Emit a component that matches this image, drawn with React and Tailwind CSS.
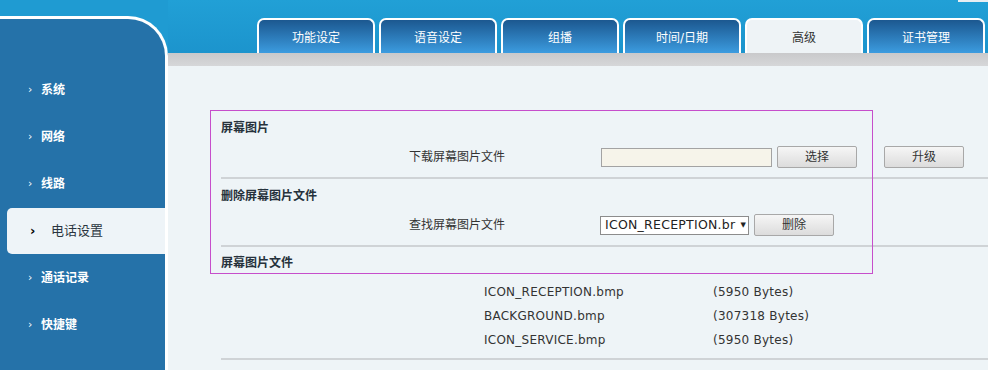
import React from 'react';

const tabs = ['功能设定', '语音设定', '组播', '时间/日期', '高级', '证书管理'];
const menu = ['系统', '网络', '线路', '电话设置', '通话记录', '快捷键'];
const files = [
  { name: 'ICON_RECEPTION.bmp', size: '(5950 Bytes)' },
  { name: 'BACKGROUND.bmp', size: '(307318 Bytes)' },
  { name: 'ICON_SERVICE.bmp', size: '(5950 Bytes)' },
];

function Btn({ children, className = '' }) {
  return (
    <div className={`h-[22px] w-[80px] rounded-[2px] border border-[#a8a8a8] bg-linear-to-b from-[#f6f6f6] to-[#dcdcdc] flex items-center justify-center text-[12px] text-[#333] ${className}`}>
      {children}
    </div>
  );
}

function Sep() {
  return <div className="h-[2px] bg-[#cfd3d6]" />;
}

export default function App() {
  return (
    <div className="relative w-[988px] h-[370px] overflow-hidden flex bg-[#1f9bd2] font-['DejaVu_Sans','Noto_Sans_CJK_SC',sans-serif]">
      {/* left menu */}
      <aside className="mt-[16px] w-[168px] shrink-0 rounded-tr-[40px] border-t-[3px] border-r-[3px] border-white bg-[#2572a9] pt-[47px]">
        {menu.map((m, i) => {
          const active = i === 3;
          return (
            <div key={m} className="h-[47px] flex items-center">
              {active ? (
                <div className="ml-[7px] flex-1 h-[46px] rounded-l-[5px] bg-[#eef4f8] flex items-center">
                  <span className="ml-[23px] w-[21px] text-[13px] font-bold text-black leading-none">›</span>
                  <span className="text-[13px] text-[#2a3440]">{m}</span>
                </div>
              ) : (
                <>
                  <span className="ml-[28px] w-[13px] text-[11px] text-white leading-none">›</span>
                  <span className="text-[12px] font-bold text-white">{m}</span>
                </>
              )}
            </div>
          );
        })}
      </aside>

      {/* right side */}
      <div className="flex-1 flex flex-col">
        <div className="relative h-[53px] flex items-end gap-[4px] pl-[89px] bg-linear-to-b from-[#21a0d6] to-[#1c94cd]">
          <div className="absolute right-0 top-0 w-[30px] h-[2px] bg-[#e8eef2]" />
          {tabs.map((t, i) => {
            const active = i === 4;
            return (
              <div
                key={t}
                className={`w-[118px] h-[35px] pt-[2px] rounded-t-[7px] border-2 border-b-0 border-white flex items-center justify-center text-[12px] ${active ? 'bg-[#eef3f6] text-[#333]' : 'bg-linear-to-b from-[#1c5890] to-[#3c9ce0] text-white'}`}
              >
                {t}
              </div>
            );
          })}
        </div>
        <div className="h-[13px] bg-linear-to-b from-[#c9c9cb] to-[#d6d7d9]" />

        <main className="flex-1 bg-[#eef4f7] pl-[53px] pt-[50px] text-[12px] text-[#333]">
          <div className="h-[24px] flex items-center font-bold text-[#26323c]">屏幕图片</div>
          <div className="h-[34px] mb-[3px] flex items-center">
            <div className="w-[284px] text-right">下载屏幕图片文件</div>
            <div className="ml-[96px] w-[171px] h-[19px] border border-[#a3a3a3] bg-[#f6f4ea]" />
            <Btn className="ml-[5px]">选择</Btn>
            <Btn className="ml-[27px]">升级</Btn>
          </div>
          <Sep />
          <div className="h-[34px] flex items-center font-bold text-[#26323c]">删除屏幕图片文件</div>
          <div className="h-[24px] mb-[8px] flex items-center">
            <div className="w-[284px] text-right">查找屏幕图片文件</div>
            <div className="ml-[95px] w-[149px] h-[19px] border border-[#8c8c8c] bg-white flex items-center pl-[4px] overflow-hidden whitespace-nowrap tracking-[0.25px] text-[12.5px] text-[#222]">
              ICON_RECEPTION.br
              <span className="ml-[5px] text-[7px] tracking-normal">▼</span>
            </div>
            <Btn className="ml-[5px]">删除</Btn>
          </div>
          <Sep />
          <div className="h-[32px] flex items-center font-bold text-[#26323c]">屏幕图片文件</div>
          <div className="mt-[1px] pl-[263px] tracking-[0.25px]">
            {files.map((f) => (
              <div key={f.name} className="h-[24px] flex items-center">
                <span className="w-[229px]">{f.name}</span>
                <span>{f.size}</span>
              </div>
            ))}
          </div>
          <div className="mt-[6px]">
            <Sep />
          </div>
        </main>
      </div>

      {/* highlight frame over the form */}
      <div className="absolute left-[210px] top-[110px] w-[663px] h-[164px] border border-[#c64ecb] pointer-events-none" />
    </div>
  );
}
